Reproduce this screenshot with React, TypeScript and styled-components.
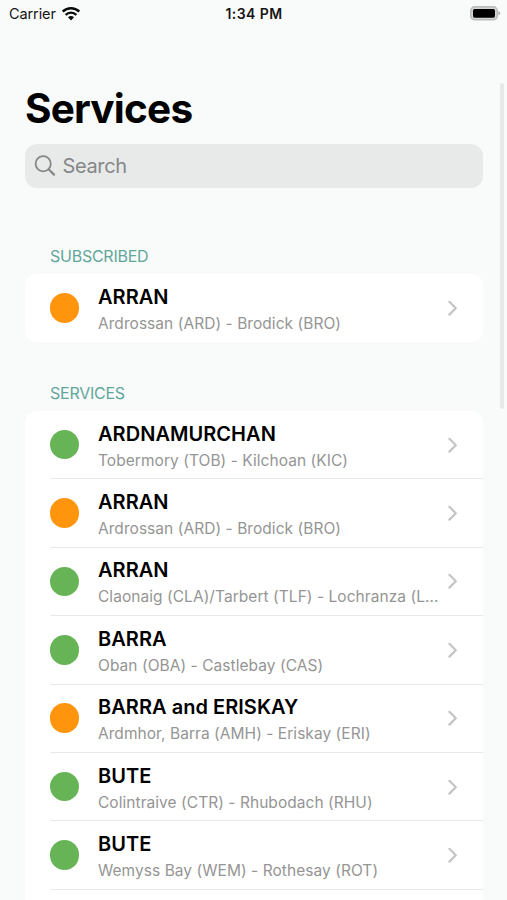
import React from "react";
import styled, { createGlobalStyle } from "styled-components";

const GlobalStyle = createGlobalStyle`
  * { box-sizing: border-box; }
  html, body { margin: 0; height: 100%; overflow: hidden; }
  body {
    background: #f9fbfa;
    font-family: Inter, "Liberation Sans", sans-serif;
    -webkit-font-smoothing: antialiased;
  }
  h1, h2, ul { margin: 0; padding: 0; }
`;

const Screen = styled.div`
  position: relative;
  width: 507px;
  height: 900px;
  overflow: hidden;
  background: #f9fbfa;
`;

const StatusBar = styled.header`
  display: grid;
  grid-template-columns: 1fr auto 1fr;
  align-items: center;
  height: 27px;
  padding: 0 6px 0 9px;
  font-size: 14.5px;
  color: #161616;
`;

const Carrier = styled.div`
  display: flex;
  align-items: center;
  gap: 6px;
  letter-spacing: -0.1px;
`;

const Clock = styled.time`
  margin-right: 2px;
  font-size: 14px;
  font-weight: 600;
  letter-spacing: 0.45px;
`;

const Battery = styled.svg`
  justify-self: end;
`;

const Content = styled.main`
  display: flex;
  flex-direction: column;
  padding: 57px 24.5px 0 25px;
`;

const Title = styled.h1`
  height: 50px;
  line-height: 50px;
  font-size: 40.5px;
  font-weight: 700;
  letter-spacing: -0.8px;
  color: #000;
`;

const SearchField = styled.div`
  display: flex;
  align-items: center;
  gap: 6.5px;
  height: 43.5px;
  margin-top: 10px;
  padding: 1px 0 0 9px;
  border-radius: 12px;
  background: #e8eae9;
  color: #858788;
  font-size: 20px;
  letter-spacing: -0.35px;
`;

const Section = styled.section<{ $gap: number }>`
  margin-top: ${(p) => p.$gap}px;
`;

const SectionTitle = styled.h2`
  height: 28px;
  padding-left: 25px;
  line-height: 20px;
  font-size: 16px;
  font-weight: 400;
  letter-spacing: -0.25px;
  color: #62a69a;
`;

const Card = styled.ul`
  list-style: none;
  border-radius: 12px;
  background: #fff;
  overflow: hidden;
`;

const Row = styled.li`
  display: flex;
  height: 68.4px;
  padding-left: 25px;
  align-items: stretch;

  &:not(:last-child) > div {
    border-bottom: 1px solid #e9e9ea;
  }
`;

const RowBody = styled.div`
  flex: 1;
  min-width: 0;
  display: grid;
  grid-template-columns: 29px minmax(0, 1fr) 10px;
  align-items: center;
  column-gap: 19px;
  padding-right: 24.5px;
`;

const Dot = styled.span<{ $color: string }>`
  width: 29.5px;
  height: 29.5px;
  margin-left: -0.3px;
  border-radius: 50%;
  background: ${(p) => p.$color};
`;

const Labels = styled.div`
  min-width: 0;
  margin-right: -12px;
  padding-top: 4px;
`;

const Name = styled.div`
  height: 27px;
  line-height: 27px;
  font-size: 20px;
  font-weight: 600;
  letter-spacing: 0.04px;
  color: #000;
  white-space: nowrap;
`;

const Route = styled.div`
  height: 25px;
  line-height: 25px;
  font-size: 15.5px;
  letter-spacing: 0.05px;
  color: #959595;
  white-space: nowrap;
  overflow: hidden;
  text-overflow: ellipsis;
`;

const ScrollThumb = styled.div`
  position: absolute;
  top: 83px;
  right: 3px;
  width: 4px;
  height: 326px;
  border-radius: 2px;
  background: #e7e9e8;
`;

const GREEN = "#67b457";
const ORANGE = "#ff950d";

interface Service {
  name: string;
  route: string;
  color: string;
}

const subscribed: Service[] = [
  { name: "ARRAN", route: "Ardrossan (ARD) - Brodick (BRO)", color: ORANGE },
];

const services: Service[] = [
  { name: "ARDNAMURCHAN", route: "Tobermory (TOB) - Kilchoan (KIC)", color: GREEN },
  { name: "ARRAN", route: "Ardrossan (ARD) - Brodick (BRO)", color: ORANGE },
  { name: "ARRAN", route: "Claonaig (CLA)/Tarbert (TLF) - Lochranza (L…", color: GREEN },
  { name: "BARRA", route: "Oban (OBA) - Castlebay (CAS)", color: GREEN },
  { name: "BARRA and ERISKAY", route: "Ardmhor, Barra (AMH) - Eriskay (ERI)", color: ORANGE },
  { name: "BUTE", route: "Colintraive (CTR) - Rhubodach (RHU)", color: GREEN },
  { name: "BUTE", route: "Wemyss Bay (WEM) - Rothesay (ROT)", color: GREEN },
  { name: "", route: "", color: "transparent" },
];

const WifiIcon = () => (
  <svg width="18" height="14" viewBox="0 0 18 14" fill="none" stroke="#0b0b0b">
    <path d="M0.7 4.6C5.4 0.2 12.6 0.2 17.3 4.6" strokeWidth="2.4" />
    <path d="M3.6 7.8C6.6 4.9 11.4 4.9 14.4 7.8" strokeWidth="2.3" />
    <path d="M9 13.4L6 10.3C7.7 8.7 10.3 8.7 12 10.3Z" fill="#0b0b0b" stroke="none" />
  </svg>
);

const BatteryIcon = () => (
  <Battery width="31" height="15" viewBox="0 0 31 15">
    <rect x="0.8" y="0.9" width="26.4" height="12.8" rx="3.8" fill="#d4d6d5" stroke="#bcbebd" strokeWidth="1.6" />
    <rect x="3" y="2.9" width="22" height="8.8" rx="1.6" fill="#000" />
    <path d="M28.4 5C30.7 5.8 30.7 8.6 28.4 9.4Z" fill="#a9abaa" />
  </Battery>
);

const SearchIcon = () => (
  <svg width="22" height="22" viewBox="0 0 22 22" fill="none" stroke="#858788" strokeWidth="1.8" strokeLinecap="round">
    <circle cx="9.2" cy="8.8" r="7.6" />
    <path d="M14.7 14.3L20 19.6" strokeWidth="2.2" />
  </svg>
);

const Chevron = () => (
  <svg width="10" height="16" viewBox="0 0 10 16" fill="none" stroke="#c4c4c6" strokeWidth="2.2" strokeLinecap="round" strokeLinejoin="round">
    <path d="M1.4 1.8L7.8 8.2L1.4 14.6" />
  </svg>
);

const ServiceList = ({ title, items, gap }: { title: string; items: Service[]; gap: number }) => (
  <Section $gap={gap}>
    <SectionTitle>{title}</SectionTitle>
    <Card>
      {items.map((s, i) => (
        <Row key={i}>
          <RowBody>
            <Dot $color={s.color} />
            <Labels>
              <Name>{s.name}</Name>
              <Route>{s.route}</Route>
            </Labels>
            <Chevron />
          </RowBody>
        </Row>
      ))}
    </Card>
  </Section>
);

export default function App() {
  return (
    <>
      <GlobalStyle />
      <Screen>
        <StatusBar>
          <Carrier>
            Carrier
            <WifiIcon />
          </Carrier>
          <Clock>1:34 PM</Clock>
          <BatteryIcon />
        </StatusBar>
        <Content>
          <Title>Services</Title>
          <SearchField>
            <SearchIcon />
            Search
          </SearchField>
          <ServiceList title="SUBSCRIBED" items={subscribed} gap={58.5} />
          <ServiceList title="SERVICES" items={services} gap={40.6} />
        </Content>
        <ScrollThumb />
      </Screen>
    </>
  );
}
